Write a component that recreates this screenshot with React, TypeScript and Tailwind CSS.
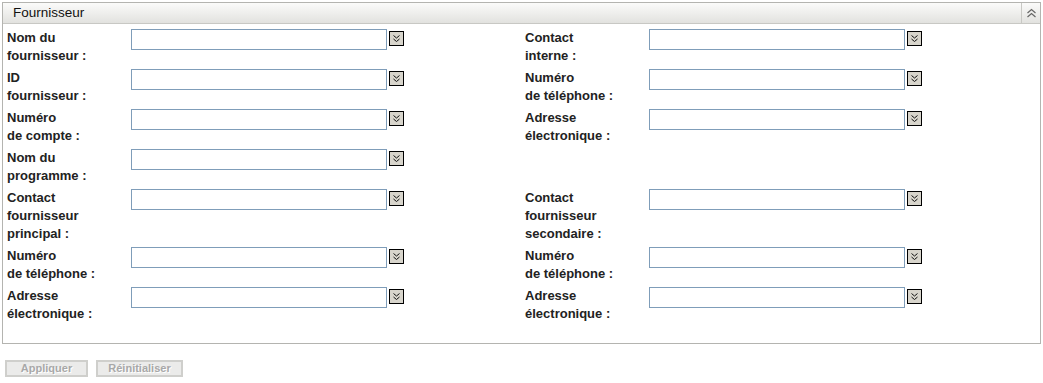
import React from "react";

type Field = { label: string[] } | null;

const rows: [Field, Field][] = [
  [{ label: ["Nom du", "fournisseur :"] }, { label: ["Contact", "interne :"] }],
  [{ label: ["ID", "fournisseur :"] }, { label: ["Numéro", "de téléphone :"] }],
  [{ label: ["Numéro", "de compte :"] }, { label: ["Adresse", "électronique :"] }],
  [{ label: ["Nom du", "programme :"] }, null],
  [
    { label: ["Contact", "fournisseur", "principal :"] },
    { label: ["Contact", "fournisseur", "secondaire :"] },
  ],
  [{ label: ["Numéro", "de téléphone :"] }, { label: ["Numéro", "de téléphone :"] }],
  [{ label: ["Adresse", "électronique :"] }, { label: ["Adresse", "électronique :"] }],
];

const PickerButton: React.FC = () => (
  <button className="ml-[2px] mt-[2px] flex h-[15px] w-[15px] items-center justify-center border border-black bg-[#d8d5cc]">
    <svg width="9" height="9" viewBox="0 0 9 9" fill="none" stroke="#111" strokeWidth="1">
      <path d="M1.5 1.5 L4.5 4 L7.5 1.5" />
      <path d="M1.5 5 L4.5 7.5 L7.5 5" />
    </svg>
  </button>
);

const FieldCell: React.FC<{ field: Field }> = ({ field }) => {
  if (!field) return <div />;
  return (
    <div className="flex items-start">
      <div className="w-[124px] text-[13px] font-bold leading-[18px] text-[#222]">
        {field.label.map((l, i) => (
          <div key={i}>{l}</div>
        ))}
      </div>
      <input
        type="text"
        className="h-[21px] w-[256px] border border-[#7f9db9] bg-white outline-none"
      />
      <PickerButton />
    </div>
  );
};

const App: React.FC = () => {
  return (
    <div className="min-h-[383px] w-[1043px] bg-white pl-[2px] pt-[2px] font-['Liberation_Sans',Arial,sans-serif]">
      <div className="w-[1039px] border border-[#b4b4b0]">
        <div className="flex h-[21px] items-center justify-between border-b border-[#c8c8c4] bg-gradient-to-b from-[#fbfbfa] to-[#e2e2df]">
          <span className="pl-[10px] text-[13.5px] text-[#111]">Fournisseur</span>
          <div className="flex h-full w-[19px] items-center justify-center border-l border-[#c8c8c4]">
            <svg width="11" height="11" viewBox="0 0 11 11" fill="none" stroke="#666" strokeWidth="1.2">
              <path d="M1.5 5 L5.5 1.5 L9.5 5" />
              <path d="M1.5 9 L5.5 5.5 L9.5 9" />
            </svg>
          </div>
        </div>
        <div className="grid grid-cols-[518px_1fr] gap-y-[4px] pb-[20px] pl-[4px] pt-[5px]">
          {rows.map(([l, r], i) => (
            <React.Fragment key={i}>
              <FieldCell field={l} />
              <FieldCell field={r} />
            </React.Fragment>
          ))}
        </div>
      </div>
      <div className="mt-[16px] flex gap-[8px] pl-[3px]">
        <button
          disabled
          className="h-[17px] w-[83px] border-2 border-[#cfcfcc] bg-[#ebebea] text-[11px] font-bold leading-[13px] text-[#a8a8a8] [text-shadow:1px_1px_0_#fff]"
        >
          Appliquer
        </button>
        <button
          disabled
          className="h-[17px] w-[87px] border-2 border-[#cfcfcc] bg-[#ebebea] text-[11px] font-bold leading-[13px] text-[#a8a8a8] [text-shadow:1px_1px_0_#fff]"
        >
          Réinitialiser
        </button>
      </div>
    </div>
  );
};

export default App;
